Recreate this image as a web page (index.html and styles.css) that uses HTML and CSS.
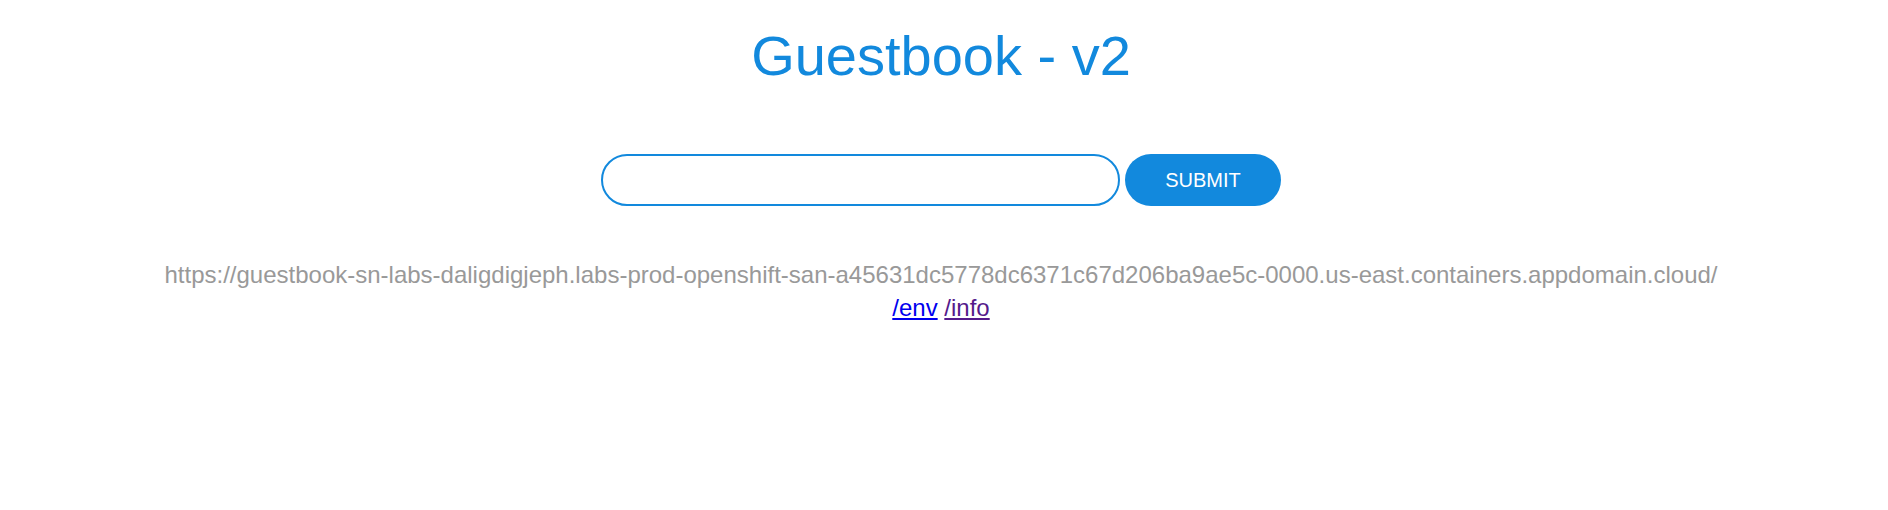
FILE: index.html
```html
<!DOCTYPE html>
<html>
<head>
<meta charset="utf-8">
<title>Guestbook - v2</title>
<link rel="stylesheet" href="styles.css">
</head>
<body>
<div class="container">
  <h1 class="title">Guestbook - v2</h1>
  <form class="entry-form">
    <input class="entry-input" type="text">
    <button class="submit-btn" type="button">SUBMIT</button>
  </form>
  <div class="address">https://guestbook-sn-labs-daligdigjeph.labs-prod-openshift-san-a45631dc5778dc6371c67d206ba9ae5c-0000.us-east.containers.appdomain.cloud/</div>
  <div class="links"><a class="link" href="#env">/env</a> <a class="link visited" href="#info">/info</a></div>
</div>
</body>
</html>
```
FILE: styles.css
```css
html, body {
  margin: 0;
  padding: 0;
  background: #ffffff;
}

body {
  font-family: "Liberation Sans", Arial, sans-serif;
}

.container {
  text-align: center;
  padding-top: 24px;
  padding-right: 6px;
}

.title {
  margin: 0;
  font-size: 56px;
  font-weight: normal;
  line-height: 64px;
  color: #1289dd;
}

.entry-form {
  display: flex;
  justify-content: center;
  align-items: center;
  gap: 5px;
  margin: 66px 0 0;
}

.entry-input {
  box-sizing: border-box;
  width: 519px;
  height: 52px;
  border: 2px solid #1289dd;
  border-radius: 26px;
  outline: none;
  padding: 0 20px;
  font-family: "Liberation Sans", Arial, sans-serif;
  font-size: 20px;
  background: #fff;
  caret-color: transparent;
}

.submit-btn {
  box-sizing: border-box;
  width: 156px;
  height: 52px;
  border: none;
  border-radius: 26px;
  background: #1289dd;
  color: #ffffff;
  font-family: "Liberation Sans", Arial, sans-serif;
  font-size: 20px;
  padding: 0;
}

.address {
  margin-top: 55px;
  font-size: 24px;
  line-height: 28px;
  color: #999999;
}

.links {
  margin-top: 5px;
  font-size: 24px;
  line-height: 28px;
}

.link {
  color: #0000ee;
}

.link.visited {
  color: #551a8b;
}
```
